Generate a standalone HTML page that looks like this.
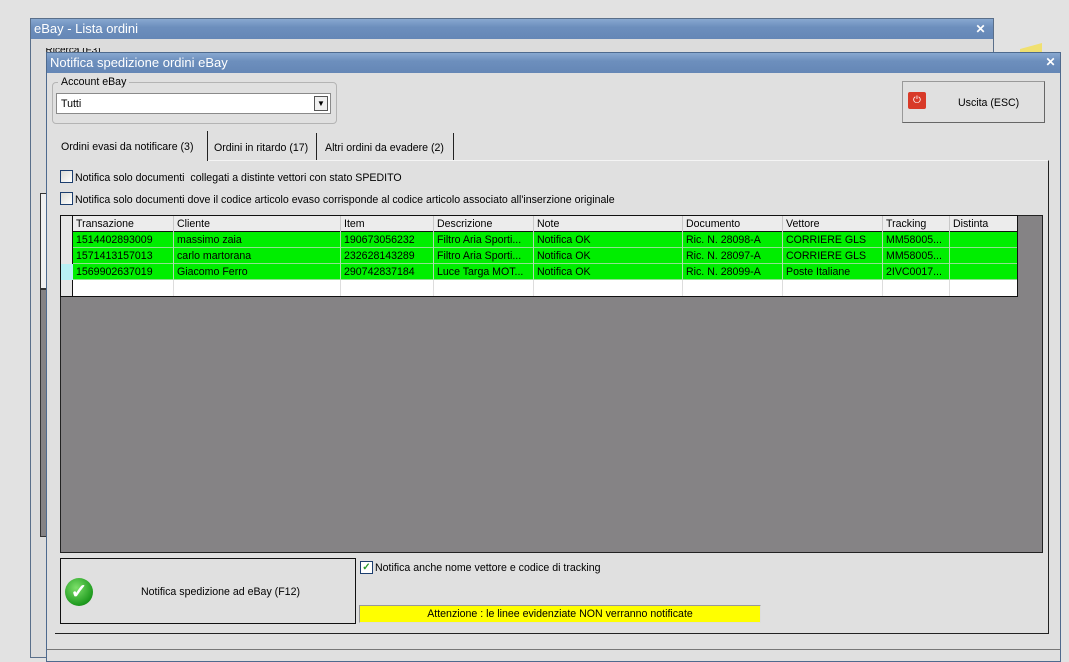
<!DOCTYPE html>
<html><head><meta charset="utf-8"><style>
*{margin:0;padding:0;box-sizing:border-box}
body{width:1069px;height:652px;overflow:hidden;background:#e2e2e2;position:relative;font-family:"Liberation Sans",sans-serif;font-size:10.6px;color:#000}
.a{position:absolute}
.tb{background:linear-gradient(#88a8d0,#6d8fbd 40%,#6587b6);color:#fff;font-size:13px;padding-left:3px;line-height:19px}
.x{position:absolute;width:11px;height:11px;color:#fff;font-weight:bold;font-size:12px;line-height:11px;text-align:center}
.cb{position:absolute;width:13px;height:13px;border:1px solid #1c3e6e;background:linear-gradient(135deg,#dcdcd6,#fff)}
.row{position:absolute;left:61px;width:956px;height:16px;background:#00ee00;border-bottom:1px solid #8fe08f}
.row span,.hd span{position:absolute;top:0;line-height:17px;padding-left:3px;height:16px;border-left:1px solid #b0d8b0;white-space:nowrap}
.hd span{border-left:1px solid #c8c8c8;line-height:16px}
</style></head><body>
<div class="a" style="left:30px;top:18px;width:964px;height:640px;background:#dcdcdc;border:1px solid #5a6f8a"></div>
<div class="a tb" style="left:31px;top:19px;width:962px;height:20px">eBay - Lista ordini</div>
<div class="x" style="left:975px;top:24px">✕</div>
<div class="a" style="left:40px;top:48px;width:900px;height:8px;font-size:10px;line-height:6px;overflow:hidden">&nbsp;&nbsp;Ricerca (F3)</div>
<div class="a" style="left:40px;top:193px;width:7px;height:96px;background:#f0f0f0;border:1px solid #333"></div>
<div class="a" style="left:40px;top:289px;width:7px;height:248px;background:#858385;border:1px solid #333"></div>
<div class="a" style="left:1020px;top:46px;width:22px;height:10px;background:#f0e070;transform:skewY(-15deg)"></div>
<div class="a" style="left:46px;top:52px;width:1015px;height:610px;background:#e0e0e0;border:1px solid #4e6a8e"></div>
<div class="a tb" style="left:47px;top:53px;width:1013px;height:20px">Notifica spedizione ordini eBay</div>
<div class="x" style="left:1045px;top:57px">✕</div>
<div class="a" style="left:52px;top:82px;width:285px;height:42px;border:1px solid #b4b4b4;border-radius:4px"></div>
<div class="a" style="left:58px;top:75px;background:#e0e0e0;padding:0 3px;line-height:14px">Account eBay</div>
<div class="a" style="left:56px;top:93px;width:275px;height:21px;background:#fff;border:1px solid #8a8a8a;line-height:20px;padding-left:4px">Tutti</div>
<div class="a" style="left:314px;top:96px;width:14px;height:15px;border:1px solid #555;background:#f0f0f0;font-size:8px;text-align:center;line-height:13px">▼</div>
<div class="a" style="left:902px;top:81px;width:143px;height:42px;background:#e0e0e0;border:1px solid #999;border-right-color:#666;border-bottom-color:#666"></div>
<div class="a" style="left:908px;top:92px;width:18px;height:17px;background:#d83a28;border-radius:2px;color:#fff;font-size:10px;text-align:center;line-height:17px">⏻</div>
<div class="a" style="left:958px;top:97px">Uscita (ESC)</div>
<div class="a" style="left:55px;top:160px;width:994px;height:474px;border-top:1px solid #f4f4f4;border-right:1px solid #222;border-bottom:1px solid #222"></div>
<div class="a" style="left:55px;top:131px;width:153px;height:30px;background:#e0e0e0;border-right:1px solid #222;line-height:32px;padding-left:6px">Ordini evasi da notificare (3)</div>
<div class="a" style="left:208px;top:133px;width:109px;height:27px;border-right:1px solid #222;line-height:30px;padding-left:6px">Ordini in ritardo (17)</div>
<div class="a" style="left:317px;top:133px;width:137px;height:27px;border-right:1px solid #222;line-height:30px;padding-left:8px">Altri ordini da evadere (2)</div>
<div class="cb" style="left:60px;top:170px"></div>
<div class="a" style="left:75px;top:171px;line-height:14px">Notifica solo documenti &nbsp;collegati a distinte vettori con stato SPEDITO</div>
<div class="cb" style="left:60px;top:192px"></div>
<div class="a" style="left:75px;top:193px;line-height:14px">Notifica solo documenti dove il codice articolo evaso corrisponde al codice articolo associato all'inserzione originale</div>
<div class="a" style="left:60px;top:215px;width:983px;height:338px;background:#858385;border:1px solid #222"></div>
<div class="a" style="left:60px;top:215px;width:958px;height:82px;border:1px solid #111;background:#fff"></div>
<div class="a" style="left:61px;top:216px;width:12px;height:80px;background:#e6e6e6;border-right:1px solid #111"></div>
<div class="a" style="left:61px;top:264px;width:12px;height:16px;background:#b8f0f4"></div>
<div class="a hd" style="left:73px;top:216px;width:944px;height:16px;background:#ececec;border-bottom:1px solid #111">
<span style="left:0;border:0">Transazione</span><span style="left:100px">Cliente</span><span style="left:267px">Item</span><span style="left:360px">Descrizione</span><span style="left:460px">Note</span><span style="left:609px">Documento</span><span style="left:709px">Vettore</span><span style="left:809px">Tracking</span><span style="left:876px">Distinta</span></div>
<div class="row" style="left:73px;top:232px;width:944px"><span style="left:0;border:0">1514402893009</span><span style="left:100px">massimo zaia</span><span style="left:267px">190673056232</span><span style="left:360px">Filtro Aria Sporti...</span><span style="left:460px">Notifica OK</span><span style="left:609px">Ric. N. 28098-A</span><span style="left:709px">CORRIERE GLS</span><span style="left:809px">MM58005...</span><span style="left:876px">&nbsp;</span></div>
<div class="row" style="left:73px;top:248px;width:944px"><span style="left:0;border:0">1571413157013</span><span style="left:100px">carlo martorana</span><span style="left:267px">232628143289</span><span style="left:360px">Filtro Aria Sporti...</span><span style="left:460px">Notifica OK</span><span style="left:609px">Ric. N. 28097-A</span><span style="left:709px">CORRIERE GLS</span><span style="left:809px">MM58005...</span><span style="left:876px">&nbsp;</span></div>
<div class="row" style="left:73px;top:264px;width:944px"><span style="left:0;border:0">1569902637019</span><span style="left:100px">Giacomo Ferro</span><span style="left:267px">290742837184</span><span style="left:360px">Luce Targa MOT...</span><span style="left:460px">Notifica OK</span><span style="left:609px">Ric. N. 28099-A</span><span style="left:709px">Poste Italiane</span><span style="left:809px">2IVC0017...</span><span style="left:876px">&nbsp;</span></div>
<div class="a" style="left:173px;top:280px;width:1px;height:16px;background:#ddd"></div>
<div class="a" style="left:340px;top:280px;width:1px;height:16px;background:#ddd"></div>
<div class="a" style="left:433px;top:280px;width:1px;height:16px;background:#ddd"></div>
<div class="a" style="left:533px;top:280px;width:1px;height:16px;background:#ddd"></div>
<div class="a" style="left:682px;top:280px;width:1px;height:16px;background:#ddd"></div>
<div class="a" style="left:782px;top:280px;width:1px;height:16px;background:#ddd"></div>
<div class="a" style="left:882px;top:280px;width:1px;height:16px;background:#ddd"></div>
<div class="a" style="left:949px;top:280px;width:1px;height:16px;background:#ddd"></div>
<div class="a" style="left:60px;top:558px;width:296px;height:66px;background:#e0e0e0;border:1px solid #111"></div>
<div class="a" style="left:65px;top:578px;width:28px;height:28px;border-radius:50%;background:radial-gradient(circle at 40% 35%,#7de06a,#1e9a1e 70%,#126c12);color:#fff;font-size:20px;font-weight:bold;text-align:center;line-height:28px">✓</div>
<div class="a" style="left:141px;top:586px">Notifica spedizione ad eBay (F12)</div>
<div class="cb" style="left:360px;top:561px;background:#fff;color:#2a9a2a;font-size:10px;line-height:11px;text-align:center;font-weight:bold">✓</div>
<div class="a" style="left:375px;top:562px;line-height:12px">Notifica anche nome vettore e codice di tracking</div>
<div class="a" style="left:359px;top:605px;width:402px;height:18px;background:#ffff00;border:1px solid #999;border-right-color:#ddd;border-bottom-color:#ddd;text-align:center;line-height:16px">Attenzione : le linee evidenziate NON verranno notificate</div>
<div class="a" style="left:47px;top:649px;width:1013px;height:1px;background:#777"></div>
</body></html>
